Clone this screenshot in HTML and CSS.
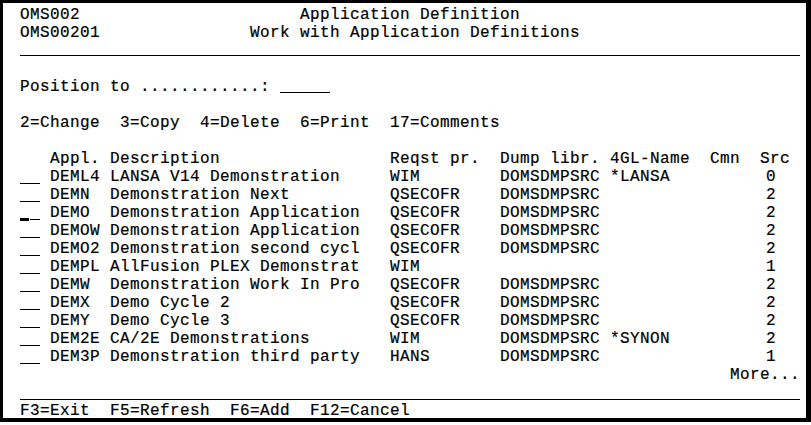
FILE: index.html
```html
<!DOCTYPE html>
<html lang="en">
<head>
<meta charset="utf-8">
<title>Work with Application Definitions</title>
<link rel="stylesheet" href="styles.css">
</head>
<body>
<div class="screen">
  <div class="row hdr hdr1"><span>OMS002</span><span>Application Definition</span></div>
  <div class="row hdr hdr2"><span>OMS00201</span><span>Work with Application Definitions</span></div>
  <div class="row"><div class="rule rule-top"></div></div>
  <div class="row"></div>
  <div class="row pos"><span>Position to ............: </span><span class="fld"><i></i><i></i><i></i><i></i><i></i></span></div>
  <div class="row"></div>
  <div class="row opts"><span>2=Change</span><span>3=Copy</span><span>4=Delete</span><span>6=Print</span><span>17=Comments</span></div>
  <div class="row"></div>
  <div class="list">
    <div></div><div>Appl.</div><div>Description</div><div>Reqst pr.</div><div>Dump libr.</div><div>4GL-Name</div><div>Cmn</div><div>Src</div>

    <div class="fld"><i></i><i></i></div><div>DEML4</div><div>LANSA V14 Demonstration</div><div>WIM</div><div>DOMSDMPSRC</div><div>*LANSA</div><div></div><div class="num">0</div>
    <div class="fld"><i></i><i></i></div><div>DEMN</div><div>Demonstration Next</div><div>QSECOFR</div><div>DOMSDMPSRC</div><div></div><div></div><div class="num">2</div>
    <div class="fld"><i class="cur"></i><i></i></div><div>DEMO</div><div>Demonstration Application</div><div>QSECOFR</div><div>DOMSDMPSRC</div><div></div><div></div><div class="num">2</div>
    <div class="fld"><i></i><i></i></div><div>DEMOW</div><div>Demonstration Application</div><div>QSECOFR</div><div>DOMSDMPSRC</div><div></div><div></div><div class="num">2</div>
    <div class="fld"><i></i><i></i></div><div>DEMO2</div><div>Demonstration second cycl</div><div>QSECOFR</div><div>DOMSDMPSRC</div><div></div><div></div><div class="num">2</div>
    <div class="fld"><i></i><i></i></div><div>DEMPL</div><div>AllFusion PLEX Demonstrat</div><div>WIM</div><div></div><div></div><div></div><div class="num">1</div>
    <div class="fld"><i></i><i></i></div><div>DEMW</div><div>Demonstration Work In Pro</div><div>QSECOFR</div><div>DOMSDMPSRC</div><div></div><div></div><div class="num">2</div>
    <div class="fld"><i></i><i></i></div><div>DEMX</div><div>Demo Cycle 2</div><div>QSECOFR</div><div>DOMSDMPSRC</div><div></div><div></div><div class="num">2</div>
    <div class="fld"><i></i><i></i></div><div>DEMY</div><div>Demo Cycle 3</div><div>QSECOFR</div><div>DOMSDMPSRC</div><div></div><div></div><div class="num">2</div>
    <div class="fld"><i></i><i></i></div><div>DEM2E</div><div>CA/2E Demonstrations</div><div>WIM</div><div>DOMSDMPSRC</div><div>*SYNON</div><div></div><div class="num">2</div>
    <div class="fld"><i></i><i></i></div><div>DEM3P</div><div>Demonstration third party</div><div>HANS</div><div>DOMSDMPSRC</div><div></div><div></div><div class="num">1</div>
  </div>
  <div class="row more">More...</div>
  <div class="row"><div class="rule rule-bottom"></div></div>
  <div class="row fkeys"><span>F3=Exit</span><span>F5=Refresh</span><span>F6=Add</span><span>F12=Cancel</span></div>
</div>
</body>
</html>
```

FILE: styles.css
```css
html, body {
  margin: 0;
  padding: 0;
  background: #ffffff;
}

.screen {
  width: 811px;
  height: 422px;
  box-sizing: border-box;
  border-style: solid;
  border-color: #000000;
  border-width: 3px 5px 4px 3px;
  padding: 2px 0 0 17px;
  font-family: "Liberation Mono", "DejaVu Sans Mono", monospace;
  font-size: 16px;
  font-weight: normal;
  -webkit-text-stroke: 0.2px #000000;
  letter-spacing: 0.4px;
  line-height: 20px;
  color: #000000;
  overflow: hidden;
}

.row {
  height: 18px;
  width: 780px;
  white-space: pre;
  display: flex;
  align-items: flex-start;
}

.hdr1 span:first-child { width: 280px; }
.hdr2 span:first-child { width: 230px; }

.rule {
  width: 780px;
  box-sizing: border-box;
  border-bottom: 1px solid #000000;
}
.rule-top { height: 15px; }
.rule-bottom { height: 17px; }

.fld {
  display: flex;
  align-items: flex-start;
}
.fld i {
  display: block;
  width: 10px;
  height: 17px;
  box-sizing: border-box;
  border-bottom: 1px solid #000000;
}
.fld i.cur {
  width: 9px;
  height: 18px;
  margin-right: 1px;
  border-bottom-width: 3px;
}
.pos .fld i { height: 16px; }

.opts { gap: 20px; }
.fkeys { gap: 20px; }

.list {
  display: grid;
  grid-template-columns: 30px 60px 280px 110px 110px 100px 50px 30px;
  grid-auto-rows: 18px;
  white-space: pre;
}
.list .num { padding-left: 6px; }

.more { justify-content: flex-end; }
```
